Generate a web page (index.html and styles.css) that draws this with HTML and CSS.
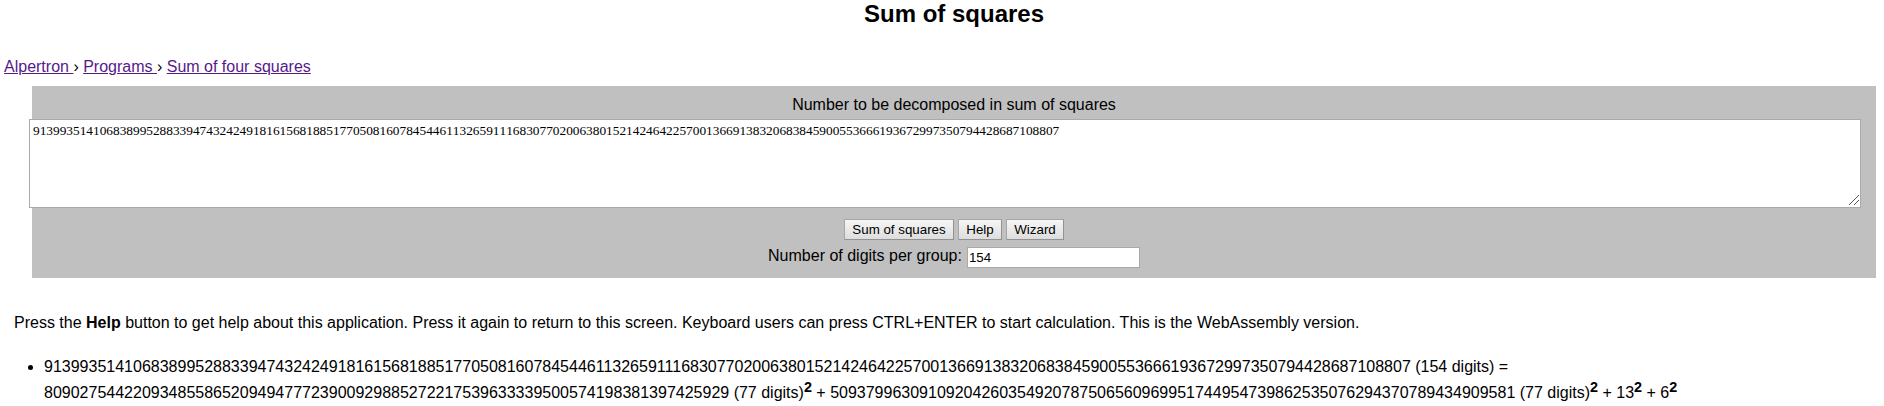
FILE: index.html
```html
<!DOCTYPE html>
<html lang="en">
<head>
<meta charset="utf-8">
<title>Sum of squares</title>
<link rel="stylesheet" href="styles.css">
</head>
<body>
<h1 class="title">Sum of squares</h1>
<nav class="crumbs"><a href="#a">Alpertron </a>› <a href="#b">Programs </a>› <a href="#c">Sum of four squares</a></nav>
<form class="panel">
<label class="caption" for="num">Number to be decomposed in sum of squares</label>
<div class="field"><textarea class="number" id="num" spellcheck="false">9139935141068389952883394743242491816156818851770508160784544611326591116830770200638015214246422570013669138320683845900553666193672997350794428687108807</textarea><svg class="grip" width="11" height="11" viewBox="0 0 11 11" shape-rendering="crispEdges"><path d="M0.5 10.5L10.5 .5M5.5 10.5L10.5 5.5" stroke="#555" fill="none"/></svg></div>
<div class="buttons"><button class="btn wide" type="button">Sum of squares</button><button class="btn help" type="button">Help</button><button class="btn wizard" type="button">Wizard</button></div>
<div class="group"><label for="digits">Number of digits per group:</label><input class="digits" id="digits" value="154"></div>
</form>
<p class="info">Press the <b>Help</b> button to get help about this application. Press it again to return to this screen. Keyboard users can press CTRL+ENTER to start calculation. This is the WebAssembly version.</p>
<ul class="result"><li>9139935141068389952883394743242491816156818851770508160784544611326591116830770200638015214246422570013669138320683845900553666193672997350794428687108807 (154 digits) =<br>80902754422093485586520949477723900929885272217539633339500574198381397425929 (77 digits)<sup>2</sup> + 50937996309109204260354920787506560969951744954739862535076294370789434909581 (77 digits)<sup>2</sup> + 13<sup>2</sup> + 6<sup>2</sup></li></ul>
</body>
</html>
```

FILE: styles.css
```css
html { background: #fff; overflow: hidden; }
body { margin: 0; color: #000; font: 16px/18px "Liberation Sans", Arial, sans-serif; }
.title { margin: 0; padding: 0 0 0 24px; height: 58px; font-size: 24px; line-height: 28px; text-align: center; }
.crumbs { height: 28px; padding-left: 4px; }
.crumbs a { color: #551a8b; text-decoration: underline; }
.panel { box-sizing: border-box; height: 192px; margin: 0 8px 0 32px; padding-top: 10px; background: #c0c0c0; text-align: center; }
.caption { display: block; height: 23px; }
.field { position: relative; width: 1832px; height: 89px; margin-left: -3px; }
.number { display: block; box-sizing: border-box; width: 100%; height: 100%; margin: 0; padding: 3px; border: 1px solid #a9a9a9; background: #fff; color: #000; resize: none; outline: 0; font: 13.333px/15px "Liberation Serif", serif; font-kerning: none; }
.grip { position: absolute; right: 2px; bottom: 2px; }
.buttons { display: flex; justify-content: center; gap: 4px; margin-top: 11px; }
.btn { box-sizing: border-box; height: 21px; padding: 0; border: 1px solid #a6a6a6; border-bottom-color: #929292; border-right-color: #929292; background: linear-gradient(#f6f6f6, #dddddd); color: #000; font: 13.333px/17px "Liberation Sans", Arial, sans-serif; }
.wide { width: 110px; }
.help { width: 44px; }
.wizard { width: 58px; }
.group { display: flex; justify-content: center; align-items: flex-start; gap: 5px; margin-top: 7px; }
.digits { box-sizing: border-box; width: 173px; height: 21px; padding: 1px; border: 1px solid #a9a9a9; background: #fff; color: #000; font: 13.333px/15px "Liberation Sans", Arial, sans-serif; }
.info { margin: 36px 14px 0; }
.result { margin: 22px 0 0; padding-left: 44px; line-height: 26px; }
.result sup { font-size: 14.4px; font-weight: bold; line-height: 0; }
```
